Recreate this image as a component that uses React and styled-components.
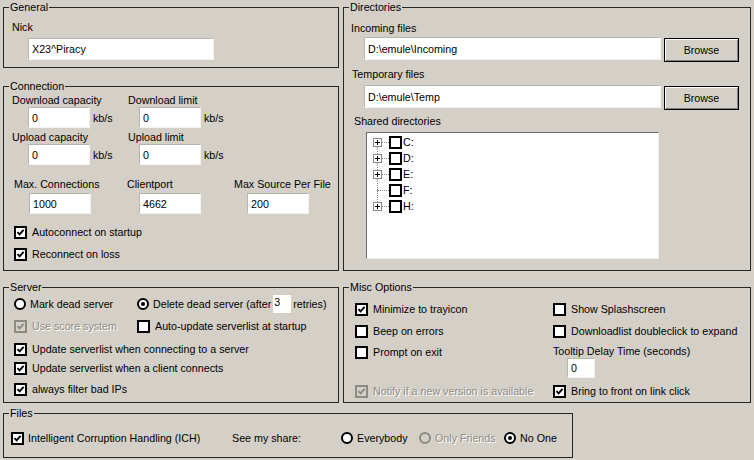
import React from 'react';
import styled, { createGlobalStyle } from 'styled-components';

const GlobalStyle = createGlobalStyle`
	html, body {
		margin: 0;
		background: #d4d0c8;
	}
	body {
		font-family: 'Liberation Sans', Arial, sans-serif;
		font-size: 10.7px;
		color: #000;
	}
`;

const Page = styled.div`
	width: 754px;
	height: 460px;
	box-sizing: border-box;
	padding: 1px 0 0 3px;
	display: flex;
	flex-direction: column;
	overflow: hidden;
`;

const Row = styled.div`
	display: flex;
	gap: 4px;
	margin-top: ${(p) => p.$mt || 0}px;
`;

const Column = styled.div`
	display: flex;
	flex-direction: column;
	gap: 12px;
`;

const Group = styled.fieldset`
	box-sizing: border-box;
	margin: 0;
	padding: 0;
	min-width: 0;
	border: 1px solid #262626;
	width: ${(p) => p.$w}px;
	height: ${(p) => p.$h}px;
	margin-top: ${(p) => p.$mt || 0}px;
`;

const Legend = styled.legend`
	padding: 0 1px;
	margin-left: 5px;
	line-height: 13px;
	font-size: inherit;
`;

const Body = styled.div`
	padding: ${(p) => p.$pad};
`;

const Label = styled.div`
	line-height: 13px;
	white-space: nowrap;
	margin-top: ${(p) => p.$mt || 0}px;
	margin-left: ${(p) => p.$ml || 0}px;
`;

const TextBox = styled.div`
	box-sizing: border-box;
	width: ${(p) => p.$w}px;
	height: ${(p) => p.$h || 21}px;
	margin-top: ${(p) => p.$mt || 0}px;
	margin-left: ${(p) => p.$ml || 0}px;
	background: #fff;
	border: 1px solid;
	border-color: #b8b5ae #f4f3f0 #f4f3f0 #b8b5ae;
	padding: 0 3px;
	display: flex;
	align-items: center;
	white-space: nowrap;
	flex-shrink: 0;
`;

const InlineBox = styled(TextBox)`
	border: none;
	padding: 0 1px;
	align-items: flex-start;
	padding-top: 1px;
	margin: 0 2px;
`;

const FieldRow = styled.div`
	display: flex;
	align-items: ${(p) => p.$align || 'center'};
	gap: ${(p) => p.$gap ?? 3}px;
	margin-top: ${(p) => p.$mt || 0}px;
	margin-left: ${(p) => p.$ml || 0}px;
`;

const RateGrid = styled.div`
	display: grid;
	grid-template-columns: 116px 120px;
	row-gap: 3px;
`;

const MaxGrid = styled.div`
	display: grid;
	grid-template-columns: 113px 107px 1fr;
	margin-top: 13px;
	padding-left: 2px;
`;

const Unit = styled.span`
	line-height: 13px;
	margin-top: 2px;
`;

/* checkbox and radio */

const CheckLine = styled.div`
	display: flex;
	align-items: center;
	height: 16px;
	gap: ${(p) => p.$gap ?? 5}px;
	white-space: nowrap;
	margin-top: ${(p) => p.$mt || 0}px;
	margin-left: ${(p) => p.$ml || 0}px;
	color: ${(p) => (p.$disabled ? '#8f8c85' : '#000')};
	text-shadow: ${(p) => (p.$disabled ? '1px 1px 0 #fff' : 'none')};
`;

const Box = styled.span`
	box-sizing: border-box;
	width: 13px;
	height: 13px;
	flex-shrink: 0;
	border: 2px solid ${(p) => (p.$disabled ? '#8d8a84' : '#000')};
	background: ${(p) => (p.$disabled ? '#d4d0c8' : '#fff')};
	display: flex;
	align-items: center;
	justify-content: center;
`;

const Ring = styled.span`
	box-sizing: border-box;
	width: 12px;
	height: 12px;
	flex-shrink: 0;
	border-radius: 50%;
	border: 2px solid ${(p) => (p.$disabled ? '#8d8a84' : '#000')};
	background: ${(p) => (p.$disabled ? '#d4d0c8' : '#fff')};
	display: flex;
	align-items: center;
	justify-content: center;
`;

const Dot = styled.span`
	width: 4px;
	height: 4px;
	border-radius: 50%;
	background: #000;
`;

const Tick = ({ disabled }) => (
	<svg width="9" height="9" viewBox="0 0 9 9">
		<path d="M1.5 4.2 L3.6 6.4 L7.6 1.8" fill="none" stroke={disabled ? '#8d8a84' : '#000'} strokeWidth="1.9" />
	</svg>
);

const Check = ({ checked, disabled, children, ...rest }) => (
	<CheckLine $disabled={disabled} {...rest}>
		<Box $disabled={disabled}>{checked && <Tick disabled={disabled} />}</Box>
		{children}
	</CheckLine>
);

const Radio = ({ checked, disabled, children, ...rest }) => (
	<CheckLine $disabled={disabled} $gap={4} {...rest}>
		<Ring $disabled={disabled}>{checked && <Dot />}</Ring>
		{children}
	</CheckLine>
);

/* directories */

const Button = styled.div`
	box-sizing: border-box;
	width: ${(p) => p.$w}px;
	height: 24px;
	margin-top: 1px;
	border: 1px solid #000;
	background: #d4d0c8;
	box-shadow: inset 1px 1px 0 #fff, inset -1px -1px 0 #808080;
	display: flex;
	align-items: center;
	justify-content: center;
`;

const TreeBox = styled.div`
	box-sizing: border-box;
	width: 293px;
	height: 127px;
	margin: 4px 0 0 15px;
	background: #fff;
	border: 1px solid;
	border-color: #6e6c68 #f4f3f0 #f4f3f0 #6e6c68;
	padding: 1px 0 0 6px;
`;

const TreeList = styled.div`
	position: relative;
	&::before {
		content: '';
		position: absolute;
		left: 4px;
		top: 8px;
		height: 64px;
		border-left: 1px dotted #8a8a8a;
	}
`;

const TreeRow = styled.div`
	position: relative;
	display: flex;
	align-items: center;
	height: 16px;
`;

const Expander = styled.span`
	box-sizing: border-box;
	width: 9px;
	height: 9px;
	border: 1px solid #8a8a8a;
	background: #fff;
	display: flex;
	align-items: center;
	justify-content: center;
	flex-shrink: 0;
`;

const NoExpander = styled.span`
	width: 0;
	margin-left: 4px;
	flex-shrink: 0;
`;

const Connector = styled.span`
	width: ${(p) => p.$w}px;
	border-top: 1px dotted #8a8a8a;
	flex-shrink: 0;
`;

const DriveName = styled.span`
	margin-left: 1px;
	line-height: 13px;
`;

const Plus = () => (
	<svg width="7" height="7" viewBox="0 0 7 7">
		<path d="M1 3.5 H6 M3.5 1 V6" stroke="#000" strokeWidth="1" />
	</svg>
);

/* misc / server grids */

const TwoCol = styled.div`
	display: grid;
	grid-template-columns: ${(p) => p.$cols};
	align-items: start;
	margin-top: ${(p) => p.$mt || 0}px;
`;

const ShareRow = styled.div`
	display: grid;
	grid-template-columns: 221px 109px 78px 85px 1fr;
	align-items: center;
	height: 16px;
`;

const DRIVES = [
	{ name: 'C:', expand: true },
	{ name: 'D:', expand: true },
	{ name: 'E:', expand: true },
	{ name: 'F:', expand: false },
	{ name: 'H:', expand: true },
];

const RateField = ({ label, value, indent }) => (
	<div>
		<Label>{label}</Label>
		<FieldRow $ml={indent} $gap={3}>
			<TextBox $w={62}>{value}</TextBox>
			<Unit>kb/s</Unit>
		</FieldRow>
	</div>
);

const SmallField = ({ label, value, indent }) => (
	<div>
		<Label>{label}</Label>
		<TextBox $w={62} $mt={2} $ml={indent}>
			{value}
		</TextBox>
	</div>
);

const App = () => {
	return (
		<>
			<GlobalStyle />
			<Page>
				<Row>
					<Column>
						<Group $w={336} $h={67}>
							<Legend>General</Legend>
							<Body $pad="7px 0 0 8px">
								<Label>Nick</Label>
								<TextBox $w={186} $h={22} $mt={4} $ml={16}>
									X23^Piracy
								</TextBox>
							</Body>
						</Group>

						<Group $w={336} $h={191}>
							<Legend>Connection</Legend>
							<Body $pad="1px 0 0 8px">
								<RateGrid>
									<RateField label="Download capacity" value="0" indent={16} />
									<RateField label="Download limit" value="0" indent={11} />
									<RateField label="Upload capacity" value="0" indent={16} />
									<RateField label="Upload limit" value="0" indent={11} />
								</RateGrid>
								<MaxGrid>
									<SmallField label="Max. Connections" value="1000" indent={15} />
									<SmallField label="Clientport" value="4662" indent={12} />
									<SmallField label="Max Source Per File" value="200" indent={13} />
								</MaxGrid>
								<Check checked $mt={10} $ml={2}>
									Autoconnect on startup
								</Check>
								<Check checked $mt={6} $ml={2}>
									Reconnect on loss
								</Check>
							</Body>
						</Group>
					</Column>

					<Group $w={408} $h={270}>
						<Legend>Directories</Legend>
						<Body $pad="8px 0 0 7px">
							<Label>Incoming files</Label>
							<FieldRow $align="flex-start" $gap={3} $mt={2} $ml={13}>
								<TextBox $w={297} $h={23}>
									D:\emule\Incoming
								</TextBox>
								<Button $w={75}>Browse</Button>
							</FieldRow>
							<Label $mt={6} $ml={1}>
								Temporary files
							</Label>
							<FieldRow $align="flex-start" $gap={3} $mt={4} $ml={13}>
								<TextBox $w={297} $h={23}>
									D:\emule\Temp
								</TextBox>
								<Button $w={75}>Browse</Button>
							</FieldRow>
							<Label $mt={5} $ml={3}>
								Shared directories
							</Label>
							<TreeBox>
								<TreeList>
									{DRIVES.map((d) => (
										<TreeRow key={d.name}>
											{d.expand ? (
												<Expander>
													<Plus />
												</Expander>
											) : (
												<NoExpander />
											)}
											<Connector $w={d.expand ? 7 : 12} />
											<Box />
											<DriveName>{d.name}</DriveName>
										</TreeRow>
									))}
								</TreeList>
							</TreeBox>
						</Body>
					</Group>
				</Row>

				<Row $mt={10}>
					<Group $w={336} $h={122}>
						<Legend>Server</Legend>
						<Body $pad="1px 0 0 10px">
							<TwoCol $cols="123px 1fr">
								<Radio $mt={1}>Mark dead server</Radio>
								<FieldRow $gap={0}>
									<Radio checked>Delete dead server (after</Radio>
									<InlineBox $w={18} $h={18}>
										3
									</InlineBox>
									<span>retries)</span>
								</FieldRow>
							</TwoCol>
							<TwoCol $cols="123px 1fr" $mt={5}>
								<Check checked disabled>
									Use score system
								</Check>
								<Check>Auto-update serverlist at startup</Check>
							</TwoCol>
							<Check checked $mt={7}>
								Update serverlist when connecting to a server
							</Check>
							<Check checked $mt={3}>
								Update serverlist when a client connects
							</Check>
							<Check checked $mt={5}>
								always filter bad IPs
							</Check>
						</Body>
					</Group>

					<Group $w={408} $h={122}>
						<Legend>Misc Options</Legend>
						<Body $pad="7px 0 0 11px">
							<TwoCol $cols="198px 1fr">
								<Check checked>Minimize to trayicon</Check>
								<Check>Show Splashscreen</Check>
							</TwoCol>
							<TwoCol $cols="198px 1fr" $mt={6}>
								<Check>Beep on errors</Check>
								<Check>Downloadlist doubleclick to expand</Check>
							</TwoCol>
							<TwoCol $cols="198px 1fr" $mt={5}>
								<Check>Prompt on exit</Check>
								<div>
									<Label $mt={1}>Tooltip Delay Time (seconds)</Label>
									<TextBox $w={28} $h={20} $ml={14}>
										0
									</TextBox>
								</div>
							</TwoCol>
							<TwoCol $cols="198px 1fr" $mt={5}>
								<Check checked disabled>
									Notify if a new version is available
								</Check>
								<Check checked>Bring to front on link click</Check>
							</TwoCol>
						</Body>
					</Group>
				</Row>

				<Group $w={570} $h={51} $mt={4}>
					<Legend>Files</Legend>
					<Body $pad="10px 0 0 7px">
						<ShareRow>
							<Check checked $gap={4}>
								Intelligent Corruption Handling (ICH)
							</Check>
							<span>See my share:</span>
							<Radio>Everybody</Radio>
							<Radio disabled>Only Friends</Radio>
							<Radio checked>No One</Radio>
						</ShareRow>
					</Body>
				</Group>
			</Page>
		</>
	);
};

export default App;
